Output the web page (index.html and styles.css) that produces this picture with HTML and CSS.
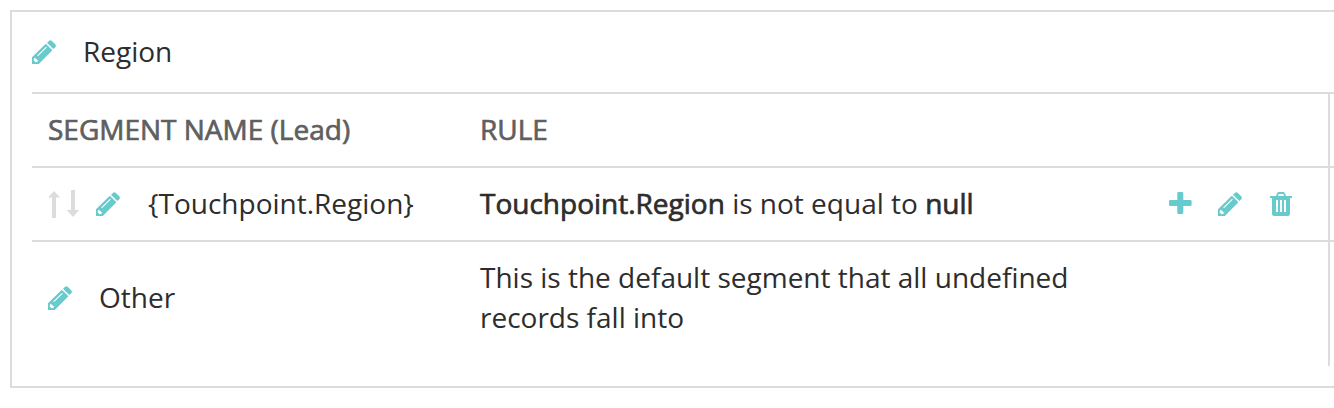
FILE: index.html
```html
<!DOCTYPE html>
<html lang="en">
<head>
<meta charset="utf-8">
<title>Region segments</title>
<link rel="stylesheet" href="styles.css">
</head>
<body>
<svg class="sprite" aria-hidden="true">
  <symbol id="pencil" viewBox="0 0 24 24">
    <path fill-rule="evenodd" d="M0 17.2L13.8 3.7L20.4 10.2L6.8 24H0ZM1.9 18.6L1.7 20.4L3.5 22.3L5.1 22.1L6.5 20.6L5 20.2L4.8 18.9L3.3 18.6L3 17.5ZM5.2 15.6L5.9 16.3L14.8 7.4L14.1 6.7Z"/>
    <path d="M15 2.7L16.9 .9Q18.4-.4 19.9 .9L23.2 4.2Q24.6 5.7 23.2 7.2L21.3 9.1Z"/>
  </symbol>
</svg>
<main class="panel">
  <header class="title"><svg class="icon"><use href="#pencil"/></svg><span>Region</span></header>
  <section class="table">
    <div class="row head"><div class="name"><span>SEGMENT NAME (Lead)</span></div><div class="rule">RULE</div></div>
    <div class="row">
      <div class="name">
        <svg class="sort" viewBox="0 0 32 28"><path d="M6 1L12.2 7.5H8V28H4V7.5H0ZM23 0H27V20H31.2L25 27L18.8 20H23Z"/></svg>
        <svg class="icon"><use href="#pencil"/></svg><span>{Touchpoint.Region}</span>
      </div>
      <div class="rule"><b>Touchpoint.Region</b> is not equal to <b>null</b></div>
      <div class="actions">
        <svg class="icon" viewBox="0 0 24 24"><path d="M9.5 0H13Q14.3 0 14.3 1.3V8H21.3Q22.6 8 22.6 9.3V12.7Q22.6 14 21.3 14H14.3V20.7Q14.3 22 13 22H9.5Q8.3 22 8.3 20.7V14H1.3Q0 14 0 12.7V9.3Q0 8 1.3 8H8.3V1.3Q8.3 0 9.5 0Z"/></svg>
        <svg class="icon"><use href="#pencil"/></svg>
        <svg class="icon trash" viewBox="0 0 24 24"><path fill-rule="evenodd" d="M6 4L7.2 1Q7.7 0 8.8 0H13.2Q14.3 0 14.8 1L16 4H22V6H20V21.5Q20 24 17.5 24H4.5Q2 24 2 21.5V6H0V4ZM8 4H14L13.4 2H8.6ZM6 8V20H8V8ZM10 8V20H12V8ZM14 8V20H16V8Z"/></svg>
      </div>
    </div>
    <div class="row last">
      <div class="name"><svg class="icon"><use href="#pencil"/></svg><span>Other</span></div>
      <div class="rule">This is the default segment that all undefined records fall into</div>
    </div>
  </section>
</main>
</body>
</html>
```
FILE: styles.css
```css
* { box-sizing: border-box; }
body {
  margin: 0;
  padding: 10px 0 0 10px;
  background: #fff;
  color: #2d2d2d;
  font: 28px/40px "Open Sans", sans-serif;
  overflow: hidden;
}
.sprite { display: none; }
.panel {
  height: 378px;
  border: 2px solid #dcdcdc;
  border-right: 0;
  padding-left: 20px;
}
.title {
  display: flex;
  align-items: center;
  gap: 27px;
  height: 80px;
}
.title span,
.name span,
.rule { padding-bottom: 2px; }
.icon {
  flex: none;
  width: 24px;
  height: 24px;
  fill: #67cacd;
}
.table {
  height: 274px;
  background: linear-gradient(#dcdcdc, #dcdcdc) right 4px top / 2px 100% no-repeat;
}
.row {
  display: grid;
  grid-template-columns: 432px 640px 1fr;
  align-items: center;
  height: 74px;
  padding: 0 0 0 16px;
  border-top: 2px solid #dcdcdc;
}
.head {
  color: #5f5f5f;
  -webkit-text-stroke: .7px #5f5f5f;
}
.name {
  display: flex;
  align-items: center;
  gap: 28px;
}
.last .name { gap: 27px; }
.sort {
  width: 32px;
  height: 28px;
  margin-right: -12px;
  fill: #dcdcdc;
}
.actions {
  display: flex;
  gap: 25px;
  padding-left: 49px;
}
.trash { margin-left: 3px; }
b {
  font-weight: 400;
  -webkit-text-stroke: .7px #2d2d2d;
}
.last { height: 114px; }
```
